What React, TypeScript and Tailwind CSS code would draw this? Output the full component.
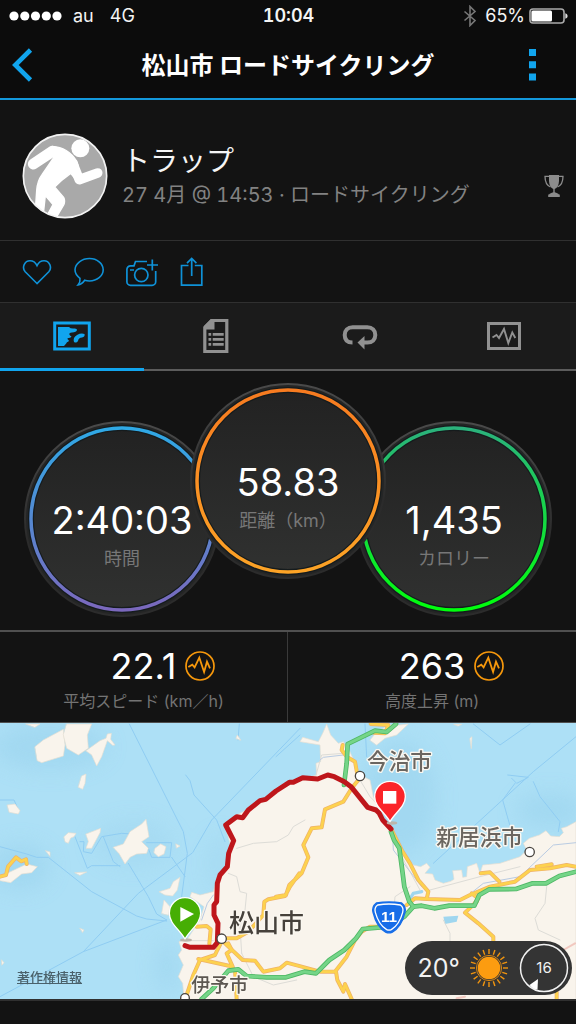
import type { ReactNode } from "react";

const FONT = "font-[Inter,'Noto_Sans_CJK_JP',sans-serif]";

function StatusBar() {
  return (
    <div className="grid h-8 grid-cols-[1fr_auto_1fr] items-center pr-2 pl-[9px] text-[18px] leading-6 text-[#f4f4f4]">
      <div className="flex items-center">
        <svg width="53" height="10" viewBox="0 0 53 10" fill="#fff" aria-hidden="true">
          <circle cx="5" cy="5" r="4.6" />
          <circle cx="15.8" cy="5" r="4.6" />
          <circle cx="26.5" cy="5" r="4.6" />
          <circle cx="37.3" cy="5" r="4.6" />
          <circle cx="48" cy="5" r="4.6" />
        </svg>
        <span className="ml-[11px]">au</span>
        <span className="ml-4">4G</span>
      </div>
      <span className="font-semibold tabular-nums">10:04</span>
      <div className="flex items-center justify-end">
        <svg width="14" height="22" viewBox="0 0 14 22" fill="none" stroke="#777" strokeWidth="1.6" aria-hidden="true">
          <path d="M1.5 6.5 12 15.5 7 20.5V1.5L12 6.5 1.5 15.5" />
        </svg>
        <span className="ml-2">65%</span>
        <svg className="ml-1" width="39" height="16" viewBox="0 0 39 16" aria-hidden="true">
          <rect x="1" y="1" width="34" height="14" rx="3" fill="none" stroke="#aaa" strokeWidth="1.6" />
          <rect x="2.4" y="2.4" width="20.6" height="11.2" rx="1.5" fill="#fff" />
          <path d="M36.3 5.2c3 .8 3 4.800 0 5.600z" fill="#ddd" />
        </svg>
      </div>
    </div>
  );
}

function TitleBar() {
  return (
    <div className="grid h-[66px] grid-cols-[48px_1fr_48px] items-center pr-5 pl-0">
      <button type="button" aria-label="戻る" className="flex h-full items-center pl-3">
        <svg width="21" height="34" viewBox="0 0 21 34" fill="none" stroke="#11a5ee" strokeWidth="4.600">
          <path d="M18.500 2 3.300 17l15.200 15" />
        </svg>
      </button>
      <h1 className="pt-px pl-5 text-center text-[24px] leading-8 font-bold whitespace-nowrap text-white">
        松山市 ロードサイクリング
      </h1>
      <button type="button" aria-label="メニュー" className="flex h-full items-center justify-center">
        <svg width="7" height="32" viewBox="0 0 7 32" fill="#11a5ee">
          <path d="M0 0h7v7H0zM0 12.200h7v7H0zM0 24.500h7v7H0z" />
        </svg>
      </button>
    </div>
  );
}

function Avatar() {
  return (
    <svg className="shrink-0" width="86" height="86" viewBox="67 68 258 258" role="img" aria-label="プロフィール">
      <defs>
        <clipPath id="avatar">
          <circle cx="196" cy="197" r="125" />
        </clipPath>
      </defs>
      <circle cx="196" cy="197" r="126" fill="#a9a9a9" />
      <g clipPath="url(#avatar)" fill="#fff" stroke="#fff" strokeLinejoin="round" strokeLinecap="round">
        <circle cx="242" cy="114" r="27" stroke="none" />
        <path d="M101 161 158 123" strokeWidth="33" fill="none" />
        <path
          d="M158 108C190 110 215 127 231 152Q236 162 237 180L229 208Q222 200 213 189Q186 208 165 230L192 261Q197 270 193 282L166 328 142 316 160 283 137 256 129 330H105L111 240Q113 212 127 193L162 142Z"
          strokeWidth="4"
        />
        <path d="m220 160 19 48 55-20" strokeWidth="29" fill="none" />
      </g>
      <circle cx="196" cy="197" r="125" fill="none" stroke="#f2f2f2" strokeWidth="5" />
    </svg>
  );
}

function Profile() {
  return (
    <section className="flex h-[141px] items-center border-b border-[#303030] pt-3 pr-3 pl-[22px]">
      <Avatar />
      <div className="ml-[14px] min-w-0 flex-1 pt-px">
        <h2 className="text-[28px] leading-9 font-normal text-[#f5f5f5]">トラップ</h2>
        <p className="text-[20px] leading-8 whitespace-nowrap text-[#828282] tabular-nums">
          27 4月 @ 14:53 · ロードサイクリング
        </p>
      </div>
      <svg className="mt-5 shrink-0" width="20" height="22" viewBox="0 0 20 22" fill="#8c8c8c" role="img" aria-label="トロフィー">
        <path d="M5 0h10v6c0 4-2 7-4.300 8v3.300c2 .5 3.300 1.300 4.300 2.200h.8V22H4.200v-2.500H5c1-.9 2.300-1.700 4.300-2.200V14C7 13 5 10 5 6z" />
        <path d="M5 1.300H1c0 6 2.500 9.500 5.500 10.700M15 1.300h4c0 6-2.500 9.500-5.500 10.700" fill="none" stroke="#8c8c8c" strokeWidth="1.300" />
      </svg>
    </section>
  );
}

function Actions() {
  return (
    <div className="flex h-[61px] items-center gap-[22px] pl-[22px] text-[#0f92d8] [&_svg]:block">
      <button type="button" aria-label="いいね">
        <svg width="30" height="30" viewBox="0 0 30 30" fill="none" stroke="currentColor" strokeWidth="1.600">
          <path d="M15 26.500 3.200 14.800C-.5 10.500 2.600 3.800 8 3.800c3.200 0 5.500 1.700 7 4.800 1.500-3.100 3.800-4.800 7-4.800 5.400 0 8.500 6.700 4.800 11z" />
        </svg>
      </button>
      <button type="button" aria-label="コメント">
        <svg width="30" height="30" viewBox="0 0 30 30" fill="none" stroke="currentColor" strokeWidth="1.600">
          <path d="M15.500 1.500c7.500 0 13.700 5 13.700 11.300 0 6.200-6.200 11.200-13.700 11.200-1.800 0-3.200-.2-4.800-.7-1.800 2.600-3.500 4.400-6.700 4.700 2-2.400 2.400-4 2-6.700C3.200 19.200 1 16.300 1 12.800 1 6.500 8 1.500 15.500 1.500z" />
        </svg>
      </button>
      <button type="button" aria-label="写真を追加">
        <svg width="32" height="30" viewBox="0 0 32 30" fill="none" stroke="currentColor" strokeWidth="1.700">
          <path d="M21 4.500H9.500L8 8.800H4.500C2.500 8.800.9 10.400.9 12.400v12.300c0 2 1.600 3.600 3.600 3.600h21.600c2 0 3.600-1.600 3.600-3.600V14" />
          <circle cx="15.300" cy="18" r="6.700" />
          <path d="M26.300 2.500v11M21 8h11M4 13h4" />
        </svg>
      </button>
      <button type="button" aria-label="共有">
        <svg width="24" height="30" viewBox="0 0 24 30" fill="none" stroke="currentColor" strokeWidth="1.700">
          <path d="M8.500 8.500h-7v19.700h20.300V8.500h-7M11.700 19V1.500M7 6.200l4.700-4.700 4.700 4.700" />
        </svg>
      </button>
    </div>
  );
}

const tabs: { name: string; icon: ReactNode }[] = [
  {
    name: "地図",
    icon: (
      <svg width="38" height="30" viewBox="0 0 38 30">
        <rect x="1.700" y="2" width="34.600" height="26" fill="none" stroke="currentColor" strokeWidth="3" />
        <path
          fill="currentColor"
          d="M5 6h11q1.500 1.800 5 1.500 3.200-.3 3 1.500-.5 2-5 2.500-3.500.5-2.500 2.200.5 1.300 2 1.500-.5 2-3 1.800-2 .5-.3 1.700 1.300.8.300 1.800-2 .6-2.300 2L11 25H5zM31.500 13q.8 2.500-2.500 3.500-3.500 0-4 3.500-1.500 2.500-4 1-1.500-4.500 3-7 4-2.200 7.500-1z"
        />
      </svg>
    ),
  },
  {
    name: "詳細",
    icon: (
      <svg width="26" height="36" viewBox="0 0 26 36">
        <path d="M8.500 2.500h15.300v31H1.800V9.500z" fill="none" stroke="currentColor" strokeWidth="3.200" />
        <path d="M11.500 2v9.500H1V8l7-7zM5.500 15h2.700v2.700H5.500zM5.500 20h2.700v2.700H5.500zM5.500 25h2.700v2.700H5.500zM9.700 15h11v2.700h-11zM9.700 20h11v2.700h-11zM9.700 25h11v2.700h-11z" fill="currentColor" />
      </svg>
    ),
  },
  {
    name: "ラップ",
    icon: (
      <svg width="36" height="28" viewBox="0 0 36 28">
        <path d="M10.500 20.600C5 20.600 2.700 17.400 2.700 13s3-7.700 8-7.700h14.600c5 0 8 3.300 8 7.700s-3 7.600-8 7.600H21" fill="none" stroke="currentColor" strokeWidth="4" />
        <path d="M22.500 14v13.500L15.500 20.600z" fill="currentColor" />
      </svg>
    ),
  },
  {
    name: "グラフ",
    icon: (
      <svg width="34" height="28" viewBox="0 0 34 28" fill="none" stroke="currentColor">
        <rect x="1.500" y="1.500" width="31" height="25" strokeWidth="3" />
        <path d="m5.500 15.500 4-2.500 2.500 3 5-9 4.300 14 4-10.500 3 5.500" strokeWidth="1.900" />
      </svg>
    ),
  },
];

function Tabs() {
  return (
    <nav role="tablist" className="grid h-[69px] grid-cols-4 border-t border-[#303030] bg-[#1b1b1b]">
      {tabs.map((tab, i) => (
        <button
          key={tab.name}
          type="button"
          role="tab"
          aria-label={tab.name}
          aria-selected={i === 0}
          className={
            i === 0
              ? "flex items-center justify-center border-b-3 border-[#11a5ee] text-[#11a5ee]"
              : "flex items-center justify-center border-b-2 border-[#5c5c5c] text-[#919191]"
          }
        >
          {tab.icon}
        </button>
      ))}
    </nav>
  );
}

type GaugeProps = { id: string; value: string; label: string; from: string; to: string; className: string };

function Gauge({ id, value, label, from, to, className }: GaugeProps) {
  return (
    <div className={`relative h-[196px] w-[196px] shrink-0 ${className}`}>
      <svg className="absolute inset-0" width="196" height="196" viewBox="0 0 196 196" aria-hidden="true">
        <defs>
          <linearGradient id={`${id}-ring`} x1="0" y1="0" x2="0" y2="1">
            <stop offset="0" stopColor={from} />
            <stop offset="1" stopColor={to} />
          </linearGradient>
          <linearGradient id={`${id}-rim`} x1="0" y1="0" x2="0" y2="1">
            <stop offset="0" stopColor="#4a4a4a" />
            <stop offset="0.600" stopColor="#2b2b2b" />
            <stop offset="1" stopColor="#2c2c2c" />
          </linearGradient>
          <linearGradient id={`${id}-face`} x1="0" y1="0" x2="0" y2="1">
            <stop offset="0" stopColor="#222" />
            <stop offset="1" stopColor="#303130" />
          </linearGradient>
        </defs>
        <circle cx="98" cy="98" r="97" fill="#242525" stroke={`url(#${id}-rim)`} strokeWidth="2" />
        <circle cx="98" cy="98" r="91" fill={`url(#${id}-face)`} stroke="#151b1d" strokeWidth="6" />
        <circle cx="98" cy="98" r="91" fill="none" stroke={`url(#${id}-ring)`} strokeWidth="3.500" />
      </svg>
      <div className="relative flex flex-col items-center pt-[74px]">
        <span className="text-[38px] leading-[50px] text-white">{value}</span>
        <span className="text-[18px] leading-[28px] text-[#777]">{label}</span>
      </div>
    </div>
  );
}

function Gauges() {
  return (
    <section className="flex justify-center pt-3 pb-[13px]">
      <Gauge id="time" value="2:40:03" label="時間" from="#2fa9e6" to="#7b68bd" className="mt-[38px]" />
      <Gauge id="dist" value="58.83" label="距離（km）" from="#f77b20" to="#fca326" className="z-10 -mx-[30px]" />
      <Gauge id="cal" value="1,435" label="カロリー" from="#2bb27c" to="#00ff0c" className="mt-[38px]" />
    </section>
  );
}

function Stat({ value, label }: { value: string; label: string }) {
  return (
    <div className="flex flex-col items-center pt-[11px] text-center">
      <div className="grid w-full grid-cols-[1fr_auto_1fr] items-center">
        <span className="col-start-2 text-[36px] leading-[46px] text-white">{value}</span>
        <svg className="ml-[9px]" width="30" height="30" viewBox="0 0 30 30" fill="none" stroke="#f6980c" aria-hidden="true">
          <circle cx="15" cy="15" r="14" strokeWidth="1.700" />
          <path d="m3.300 16 4-2.300 2.300 2.600 4.700-9.600L19.100 21 22 10.700l3 6.600" strokeWidth="1.800" />
        </svg>
      </div>
      <span className="text-[16px] leading-6 text-[#747474]">{label}</span>
    </div>
  );
}

function Stats() {
  return (
    <section className="grid h-[93px] grid-cols-2 divide-x divide-[#3a3a3a] border-t-2 border-b border-[#505050]">
      <Stat value="22.1" label="平均スピード (km／h)" />
      <Stat value="263" label="高度上昇 (m)" />
    </section>
  );
}

const yellowRoads = [
  "M0 470 18 465 24 440 48 412 64 424 78 418 80 432",
  "M590 620 620 618 632 628 628 672",
  "M665 655 710 655 745 635 790 585 793 545 805 538 855 528 870 500 898 460M828 530 858 525 868 495 905 460 925 412 910 375 935 325 965 322 975 268 1030 245 1055 205 1075 180 1065 125 1040 110 1025 90 1028 75",
  "M675 670 728 720 765 722 790 755 840 745 860 728 905 740 960 755 1005 755 1040 710 1065 660 1085 635 1110 620 1130 620",
  "M652 690 645 705 600 720 580 765 560 825M652 690 665 665M595 717 690 738 705 750 710 837M685 670 695 690 680 700 698 740",
  "M1008 755 1012 780 1030 815 1035 792 1055 837",
  "M1112 12 1165 15 1155 40 1120 38",
  "M1175 330 1205 390 1230 430 1255 480 1285 515 1280 537 1380 540 1410 525 1470 500 1545 485 1590 450 1650 445 1700 435 1728 440M1280 537 1245 535 1220 555M1442 460 1470 457 1498 485M1610 440 1655 433M1430 545 1395 578 1435 610 1480 650 1480 665M1670 815V837M1415 520 1435 535 1420 555",
];

const greenRoads = [
  "M1188 12 1160 36 1125 32 1043 72 1040 130 1032 195",
  "M1173 335 1182 360 1198 385 1208 460 1213 500 1228 545 1240 560 1265 557 1303 565 1348 557 1423 557 1438 525 1468 508 1548 507 1598 490 1638 490 1678 468 1728 455",
  "M1240 560 1213 590 1168 620 1088 627 1068 655 1033 690 988 720 948 760 913 755 858 772 800 772 740 768 715 748 685 752 640 805 605 837",
];

const islands = [
  "M105 80 130 60 190 28 195 75 190 108 125 128 112 122Z",
  "M200 12H275L262 45 265 85 235 105 200 85 190 45Z",
  "M258 92 300 62 318 55 322 42 334 40 332 58 345 75 338 76 322 62 305 110 290 138 275 105Z",
  "M245 168 258 162 255 190 248 208 235 202Z",
  "M22 255 45 252 60 272 55 282 28 277Z",
  "M192 350 205 338 228 340 222 350 212 354 205 370 196 366Z",
  "M258 342 302 325 300 338 275 385 258 385 265 365Z",
  "M340 382 370 372 390 335 425 312 438 298 447 350 425 365 445 385 440 400 410 402 390 412 375 432 358 402Z",
  "M465 385 482 372 498 380 492 402 475 410 462 398Z",
  "M0 470 80 432 112 440 95 458 65 462 32 488 0 482Z",
  "M225 458 260 456 240 466Z",
  "M478 515 510 505 520 485 540 472 532 510 518 528 495 525Z",
  "M485 580 492 540 510 560 505 585Z",
  "M137 392 150 396 150 408Z",
  "M240 625 252 630 248 637Z",
  "M528 372 540 378 530 384Z",
  "M708 55 712 45 722 60Z",
  "M78 12 120 12 105 22Z",
  "M1110 60 1125 42 1165 15 1200 15 1225 12 1190 45 1155 55 1130 75Z",
  "M1410 55 1416 50 1414 85Z",
  "M1362 13H1385L1375 18Z",
  "M5 720 12 728 6 735Z",
];

const ferries = [
  "M388 12 550 335 562 400 545 530",
  "M900 25 635 300 578 398 415 520 250 695 0 830",
  "M557 165 570 182 582 225 650 300 675 365",
  "M0 380 80 402 110 412 145 412 275 515 410 588 440 597 500 603",
  "M500 600 250 695",
  "M225 350 262 445 275 437 360 437M240 365 252 365 250 395 275 400 305 350 365 340 400 342M310 350 340 425 360 440",
  "M385 430 415 480 445 530 470 582 500 600",
  "M445 385 455 412 510 412 515 368H440M515 412 555 470",
  "M718 12 714 60M0 240H42L52 262",
  "M1728 50 1600 155 1300 430M1600 185 1620 230 1680 305 1675 335M1523 165 1585 172 1550 190 1535 175M1545 190 1508 240 1535 335",
  "M1095 12 1100 110M900 45 828 110",
  "M1420 12 1500 75 1590 12",
];

const minorRoads = [
  "M710 385 760 370 830 365 865 345 880 320 915 300",
  "M685 460 710 470 720 515 740 520 735 570 720 620 725 700",
  "M560 662 640 662M725 700 760 770 820 795 890 780",
  "M948 165 965 105 1030 100M1080 180 1110 230 1150 270",
  "M1180 360 1200 400 1260 510M1180 590 1185 530 1230 500M1290 510 1440 470 1560 440",
  "M1640 500 1635 550 1605 595 1615 630 1680 660M1330 600 1350 640V665",
];

const LAND =
  "M552 837 548 790 535 770 550 735 535 705 545 690 537 665 560 660 600 600 612 560 570 530 575 517 600 525 640 515 652 470 680 440 690 370 675 315 700 290 740 270 800 235 850 195 900 180 950 165 948 130 962 125 960 75 900 65 908 52 955 65 968 40 980 12 992 45 1015 70 1030 65 1050 95 1080 165 1110 180 1120 230 1160 310 1175 340 1200 380 1215 400 1222 418 1240 435 1262 440 1280 430 1290 442 1275 460 1298 462 1305 480 1330 490 1352 484 1362 478 1358 452 1385 450 1388 472 1400 470 1402 440 1430 430 1440 460 1448 435 1500 430 1560 410 1580 390 1570 370 1588 355 1618 345 1638 332 1652 348 1678 350 1690 338 1684 325 1700 320 1728 305V837Z";

const ROUTE =
  "M555 677 570 682H640L652 668 654 610 642 585V555L650 545 652 490 660 465 682 440 686 400 701 362 677 315 710 290 728 293 745 270 780 242 797 238 828 213 868 187H880L908 173 953 177 983 165 1003 170 1033 185 1053 200 1103 262 1128 270 1138 280 1148 300 1173 327";

function MapDrawing() {
  return (
    <svg
      className="block h-full w-full font-['Noto_Sans_CJK_JP',sans-serif] font-medium"
      viewBox="0 9 1728 828"
      preserveAspectRatio="xMidYMid slice"
      role="img"
      aria-label="コースの地図"
      strokeLinejoin="round"
      strokeLinecap="round"
      fill="none"
    >
      <defs>
        <filter id="depth" x="-50%" y="-50%" width="200%" height="200%">
          <feGaussianBlur stdDeviation="30" />
        </filter>
      </defs>
      <rect y="9" width="1728" height="828" fill="#ade0f6" />
      <g fill="#9fd6ef" filter="url(#depth)" opacity="0.750">
        <ellipse cx="150" cy="80" rx="170" ry="70" />
        <ellipse cx="60" cy="440" rx="90" ry="70" />
        <ellipse cx="400" cy="370" rx="120" ry="70" opacity="0.600" />
        <ellipse cx="1200" cy="230" rx="110" ry="170" />
        <ellipse cx="500" cy="740" rx="30" ry="80" />
        <ellipse cx="1650" cy="270" rx="100" ry="50" />
        <ellipse cx="660" cy="430" rx="40" ry="90" opacity="0.600" />
      </g>
      <g stroke="#8fccf2" strokeWidth="3">
        {ferries.map((d) => (
          <path key={d} d={d} />
        ))}
      </g>
      <g fill="#f9f4ec" stroke="#e4ded2" strokeWidth="2">
        {islands.map((d) => (
          <path key={d} d={d} />
        ))}
        <path d={LAND} />
      </g>
      <path d="M1330 590 1375 587 1370 605 1335 612Z" fill="#9fd6ef" />
      <path d="M1228 540 1240 520 1265 515" stroke="#9fd6ef" strokeWidth="10" />
      <g stroke="#dddcd7" strokeWidth="3">
        {minorRoads.map((d) => (
          <path key={d} d={d} />
        ))}
      </g>
      <g stroke="#b9cbe2" strokeWidth="3">
        <path d="M605 600 622 550 640 525M960 120 970 112 1030 105M1178 345 1180 390 1265 500M1415 518 1450 490 1560 470 1660 375 1728 368" />
      </g>
      <path d="M1690 690 1725 670M1370 835 1395 830" stroke="#eeb5ad" strokeWidth="6" opacity="0.700" />
      <g stroke="#eeb16a" strokeWidth="12">
        {yellowRoads.map((d) => (
          <path key={d} d={d} />
        ))}
      </g>
      <g stroke="#fdd24e" strokeWidth="8">
        {yellowRoads.map((d) => (
          <path key={d} d={d} />
        ))}
      </g>
      <g stroke="#4eb765" strokeWidth="14">
        {greenRoads.map((d) => (
          <path key={d} d={d} />
        ))}
      </g>
      <g stroke="#75d588" strokeWidth="9">
        {greenRoads.map((d) => (
          <path key={d} d={d} />
        ))}
      </g>
      <path d={ROUTE} stroke="#be161b" strokeWidth="15" />
      <g fill="#fff" stroke="#4a4540" strokeWidth="4">
        <circle cx="665" cy="656" r="14" />
        <circle cx="1080" cy="168" r="14" />
        <circle cx="1589" cy="396" r="14" />
        <circle cx="555" cy="834" r="13" />
      </g>
      <g stroke="#faf7f0" strokeWidth="8" paintOrder="stroke">
        <text x="687" y="635" fontSize="75" fill="#46413b">松山市</text>
        <text x="1101" y="146" fontSize="65" fill="#6b6660">今治市</text>
        <text x="1309" y="376" fontSize="65" fill="#6b6660">新居浜市</text>
        <text x="574" y="815" fontSize="57" fill="#5c5751">伊予市</text>
      </g>
      <ellipse cx="558" cy="660" rx="18" ry="5" fill="#bcb5ab" />
      <path d="M555 657C538 628 508 610 508 580c0-26 21-47 47-47s47 21 47 47c0 30-30 48-47 77Z" fill="#46ae04" stroke="#fff" strokeWidth="4" />
      <path d="m541 561 41 21-41 23Z" fill="#fff" />
      <ellipse cx="1176" cy="309" rx="16" ry="5" fill="#bcb5ab" />
      <path d="M1170 305c-16-28-46-45-46-75 0-26 20-46 46-46s46 20 46 46c0 30-30 47-46 75Z" fill="#fb2429" stroke="#fff" strokeWidth="4" />
      <path d="M1149 213h40v38h-40Z" fill="#fff" />
      <path d="M1129 549Q1167 543 1205 549 1219 560 1215 577 1204 622 1176 637 1167 640 1158 637 1130 622 1119 577 1115 560 1129 549Z" fill="#176de8" stroke="#176de8" strokeWidth="4" />
      <path d="M1133 555Q1167 549 1201 555 1212 563 1208 577 1198 614 1174 629 1167 632 1160 629 1136 614 1126 577 1122 563 1133 555Z" stroke="#fff" strokeWidth="4" />
      <text x="1167" y="606" fontSize="46" fontWeight="700" textAnchor="middle" fill="#fff" className="font-['Liberation_Sans',sans-serif]">
        11
      </text>
    </svg>
  );
}

const rays = Array.from({ length: 20 }, (_, i) => i * 18);

function WeatherPill() {
  return (
    <div className="absolute right-1 bottom-1 flex h-[54px] items-center rounded-full bg-[#343434] pr-[3px] pl-[13px] text-[#f2f2f2]">
      <span className="text-[25px] leading-8">20°</span>
      <svg className="ml-[9px]" width="40" height="40" viewBox="0 0 40 40" role="img" aria-label="晴れ">
        <circle cx="20" cy="20" r="11.300" fill="#fc9c10" />
        <circle cx="20" cy="20" r="12.600" fill="none" stroke="#e58d12" strokeWidth="0.900" />
        {rays.map((a) => (
          <path key={a} d="M20 1v5" stroke="#f1950f" strokeWidth="1.400" transform={`rotate(${a} 20 20)`} />
        ))}
      </svg>
      <div className="relative ml-[10px] flex h-[50px] w-[50px] items-center justify-center">
        <svg className="absolute inset-0" width="50" height="50" viewBox="0 0 50 50" aria-hidden="true">
          <circle cx="25" cy="25" r="23.500" fill="none" stroke="#f2f2f2" strokeWidth="1.500" />
          <path d="M19 36 18.500 46.500Q14 46.500 10.500 42Z" fill="#fff" />
        </svg>
        <span className="relative text-[15px] leading-5">16</span>
      </div>
    </div>
  );
}

function RouteMap() {
  return (
    <section className="relative aspect-[576/276] w-full">
      <MapDrawing />
      <a href="#legal" className="absolute bottom-3 left-[17px] text-[13px] leading-5 font-medium text-[#4a616b] underline">
        著作権情報
      </a>
      <WeatherPill />
    </section>
  );
}

export default function App() {
  return (
    <div className={`min-h-screen overflow-hidden bg-[#131313] ${FONT}`}>
      <header className="border-b-2 border-[#1398dc] bg-[#0c0c0c]">
        <StatusBar />
        <TitleBar />
      </header>
      <main>
        <Profile />
        <Actions />
        <Tabs />
        <Gauges />
        <Stats />
        <RouteMap />
        <div className="h-6 border-t-2 border-[#303030]" />
      </main>
    </div>
  );
}
